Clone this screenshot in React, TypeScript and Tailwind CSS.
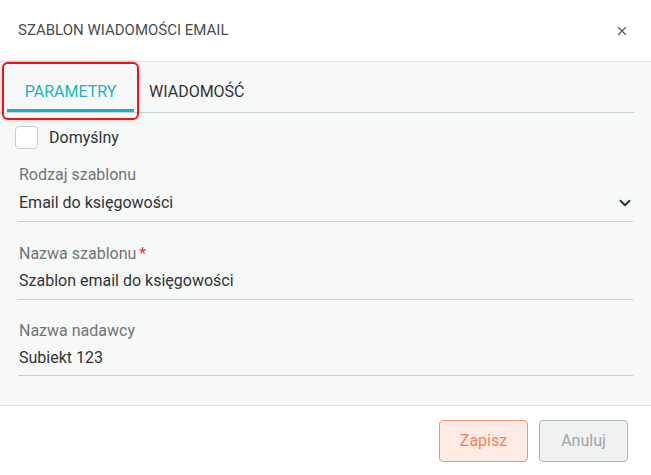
import { X, ChevronDown } from 'lucide-react';

const fields = [
  { label: 'Nazwa szablonu', value: 'Szablon email do księgowości', required: true, gap: 'mt-[22px] pb-[8px]' },
  { label: 'Nazwa nadawcy', value: 'Subiekt 123', required: false, gap: 'mt-[21px] pb-[7px]' },
];

export default function App() {
  return (
    <div
      className="relative w-[651px] h-[475px] flex flex-col bg-white text-[#333]"
      style={{ fontFamily: 'Roboto, "Noto Sans", sans-serif' }}
    >
      {/* Header */}
      <div className="h-[62px] flex items-center justify-between pl-[18px] pr-[22px] border-b border-[#e2e4e4]">
        <h1 className="text-[15px] text-[#4a4d4f] uppercase">Szablon wiadomości email</h1>
        <X className="w-[14px] h-[14px] text-[#555a5c]" strokeWidth={2.2} />
      </div>

      {/* Body */}
      <div className="flex-1 bg-[#f7f8f8] border-b border-[#e2e4e4]">
        <div className="ml-[7px] mr-[17px] flex border-b border-[#cfd2d3] h-[51px]">
          <div className="w-[127px] flex items-center justify-center border-b-[3px] border-[#1ab0c4] text-[#1ab0c4] text-[16px] pt-[12px]">
            PARAMETRY
          </div>
          <div className="flex items-center pl-[15px] text-[16px] text-[#333] pt-[9px]">WIADOMOŚĆ</div>
        </div>

        <div className="px-[18px]">
          <label className="flex items-center gap-[11px] mt-[11px] -ml-[3px]">
            <span className="w-[23px] h-[23px] rounded-[4px] border border-[#c9cdce] bg-white" />
            <span className="text-[16px] text-[#2f3436] pt-[2px]">Domyślny</span>
          </label>

          <div className="mt-[15px] border-b border-[#cbcdce] pb-[8px]">
            <div className="pl-px text-[16px] text-[#6f7577] leading-[20px]">Rodzaj szablonu</div>
            <div className="flex items-center justify-between mt-[8px]">
              <span className="pl-px text-[16px] text-[#2f3436] leading-[20px]">Email do księgowości</span>
              <ChevronDown className="w-[18px] h-[18px] text-[#2f3436] mr-[-1px]" strokeWidth={2.6} />
            </div>
          </div>

          {fields.map((f) => (
            <div key={f.label} className={`border-b border-[#cbcdce] ${f.gap}`}>
              <div className="pl-px text-[16px] text-[#6f7577] leading-[20px]">
                {f.label}
                {f.required && <span className="text-[#e8334a] ml-[3px]">*</span>}
              </div>
              <div className="pl-px text-[16px] text-[#2f3436] leading-[20px] mt-[7px]">{f.value}</div>
            </div>
          ))}
        </div>
      </div>

      {/* Footer */}
      <div className="h-[69px] flex items-center justify-end gap-[11px] pr-[23px] bg-white">
        <button className="w-[89px] h-[42px] rounded-[4px] border border-[#f7936a] bg-[#feece4] text-[#f5845a] text-[16px]">
          Zapisz
        </button>
        <button className="w-[89px] h-[42px] rounded-[4px] border border-[#a9b6b8] bg-[#f0f1f1] text-[#9ca8aa] text-[16px]">
          Anuluj
        </button>
      </div>

      {/* highlight annotation */}
      <div className="absolute left-[2px] top-[62px] w-[137px] h-[58px] rounded-[6px] border-2 border-[#e8141e] shadow-[0_0_4px_rgba(0,0,0,0.25)]" />
    </div>
  );
}
